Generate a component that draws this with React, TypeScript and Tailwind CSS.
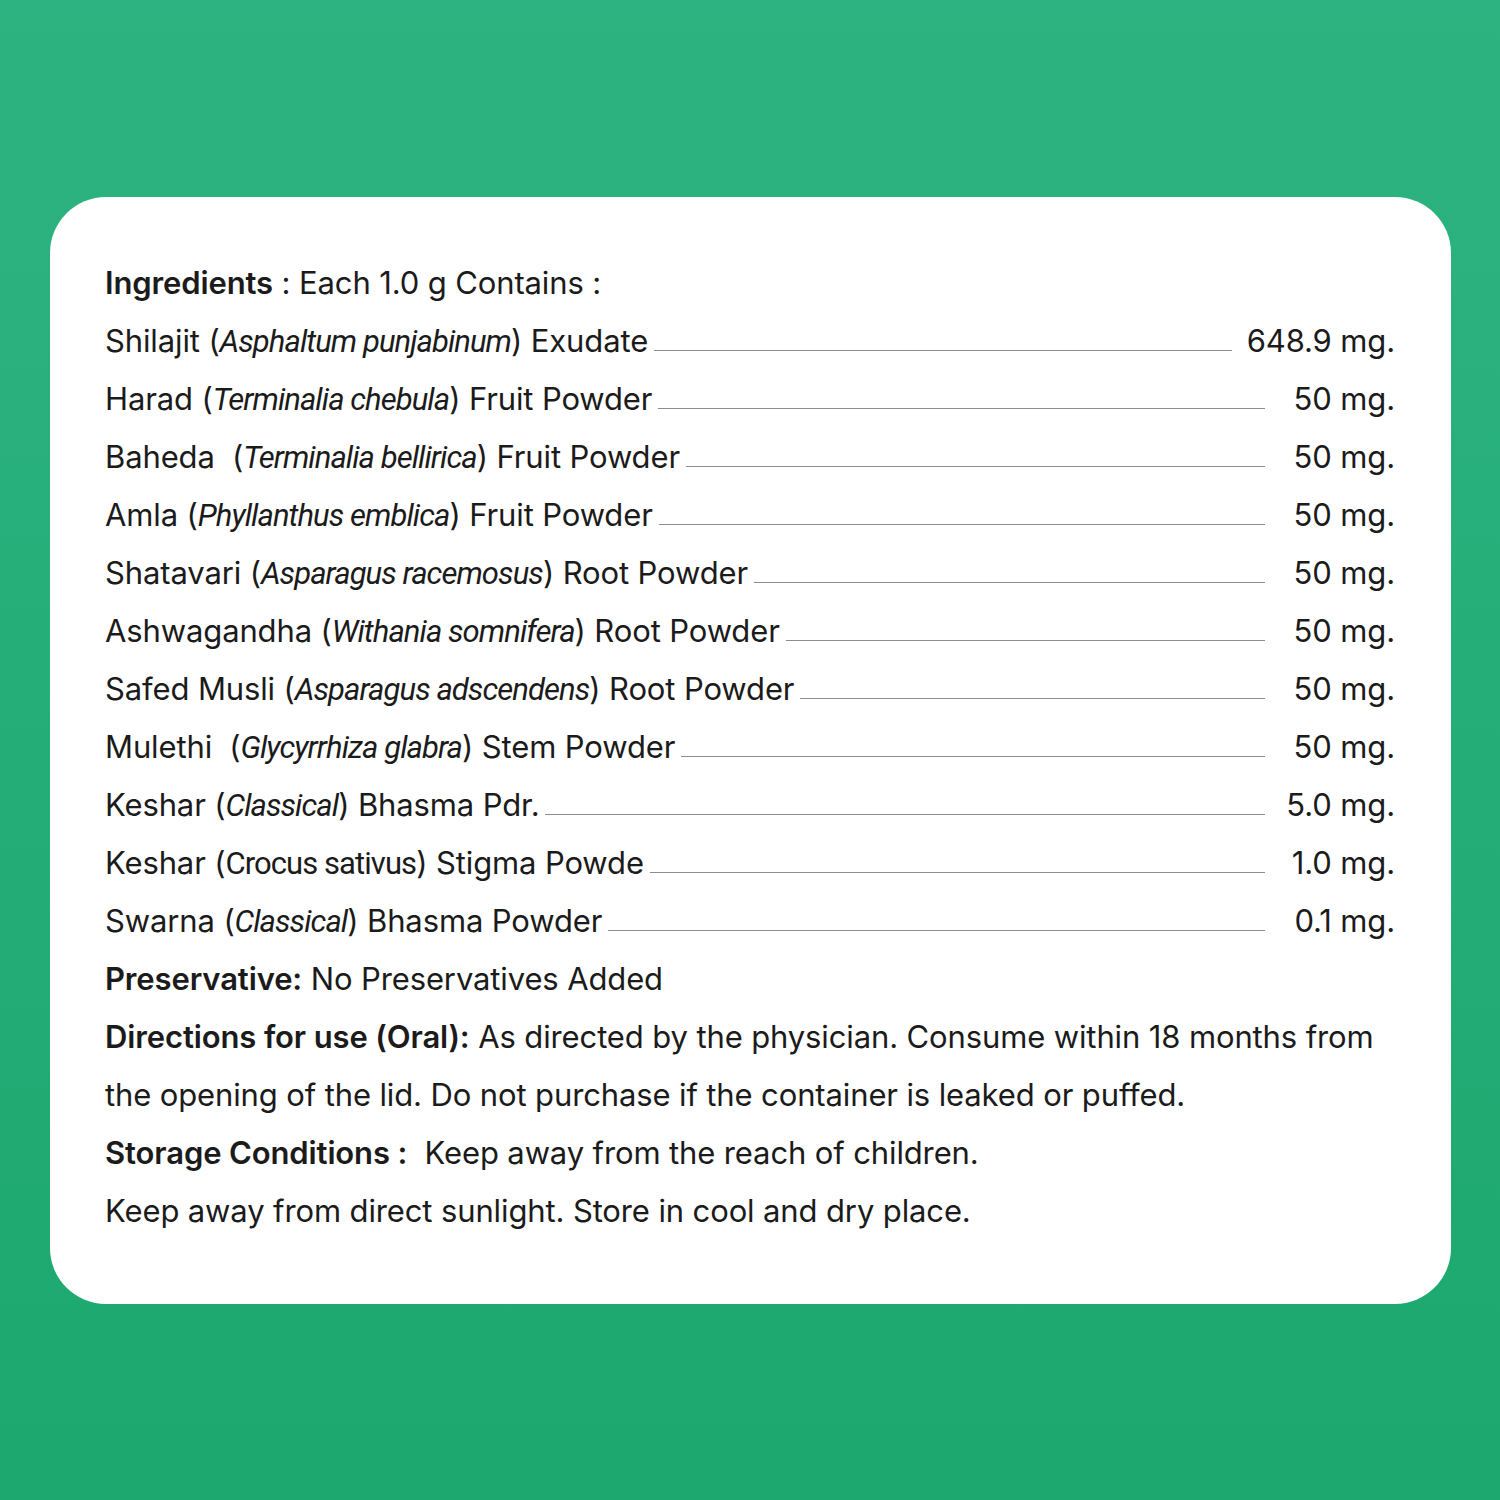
const rows: { pre: string; latin: string; post: string; value: string; upright?: boolean }[] = [
  { pre: 'Shilajit (', latin: 'Asphaltum punjabinum', post: ') Exudate', value: '648.9 mg.' },
  { pre: 'Harad (', latin: 'Terminalia chebula', post: ') Fruit Powder', value: '50 mg.' },
  { pre: 'Baheda  (', latin: 'Terminalia bellirica', post: ') Fruit Powder', value: '50 mg.' },
  { pre: 'Amla (', latin: 'Phyllanthus emblica', post: ') Fruit Powder', value: '50 mg.' },
  { pre: 'Shatavari (', latin: 'Asparagus racemosus', post: ') Root Powder', value: '50 mg.' },
  { pre: 'Ashwagandha (', latin: 'Withania somnifera', post: ') Root Powder', value: '50 mg.' },
  { pre: 'Safed Musli (', latin: 'Asparagus adscendens', post: ') Root Powder', value: '50 mg.' },
  { pre: 'Mulethi  (', latin: 'Glycyrrhiza glabra', post: ') Stem Powder', value: '50 mg.' },
  { pre: 'Keshar (', latin: 'Classical', post: ') Bhasma Pdr.', value: '5.0 mg.' },
  { pre: 'Keshar (', latin: 'Crocus sativus', post: ') Stigma Powde', value: '1.0 mg.', upright: true },
  { pre: 'Swarna (', latin: 'Classical', post: ') Bhasma Powder', value: '0.1 mg.' },
]

function IngredientRow({ pre, latin, post, value, upright }: (typeof rows)[number]) {
  return (
    <div className="flex h-[58px] items-center">
      <span className="whitespace-pre">
        {pre}
        <span
          className={
            upright
              ? "font-['Roboto'] tracking-[-0.03em]"
              : "font-['Roboto'] italic tracking-[-0.03em]"
          }
        >
          {latin}
        </span>
        {post}
      </span>
      {/* thin rule sitting on the baseline */}
      <div className="ml-[6px] h-px flex-1 self-end mb-[19px] bg-[#8e8e8e]" />
      <span className="min-w-[130px] pl-[15px] text-right whitespace-pre">{value}</span>
    </div>
  )
}

export default function App() {
  return (
    <div className="h-[1500px] w-[1500px] bg-gradient-to-b from-[#2db381] to-[#1ca86e] pt-[197px] pl-[50px] font-['Inter','Noto_Sans',sans-serif]">
      <div className="h-[1107px] w-[1401px] rounded-[56px] bg-white pt-[57px] pl-[55px] pr-[56px] text-[31px] leading-[58px] tracking-[-0.004em] text-[#1b1b1b]">
        <div className="h-[58px] whitespace-pre">
          <span className="font-semibold">Ingredients</span>
          <span> : Each 1.0 g Contains :</span>
        </div>

        {rows.map((r, i) => (
          <IngredientRow key={i} {...r} />
        ))}

        <div className="h-[58px] whitespace-pre">
          <span className="font-semibold">Preservative:</span> No Preservatives Added
        </div>
        <div>
          <span className="font-semibold">Directions for use (Oral):</span> As directed by the physician. Consume within 18 months from
          <br />
          the opening of the lid. Do not purchase if the container is leaked or puffed.
        </div>
        <div className="h-[58px] whitespace-pre">
          <span className="font-semibold">Storage Conditions :</span>  Keep away from the reach of children.
        </div>
        <div className="h-[58px]">Keep away from direct sunlight. Store in cool and dry place.</div>
      </div>
    </div>
  )
}
